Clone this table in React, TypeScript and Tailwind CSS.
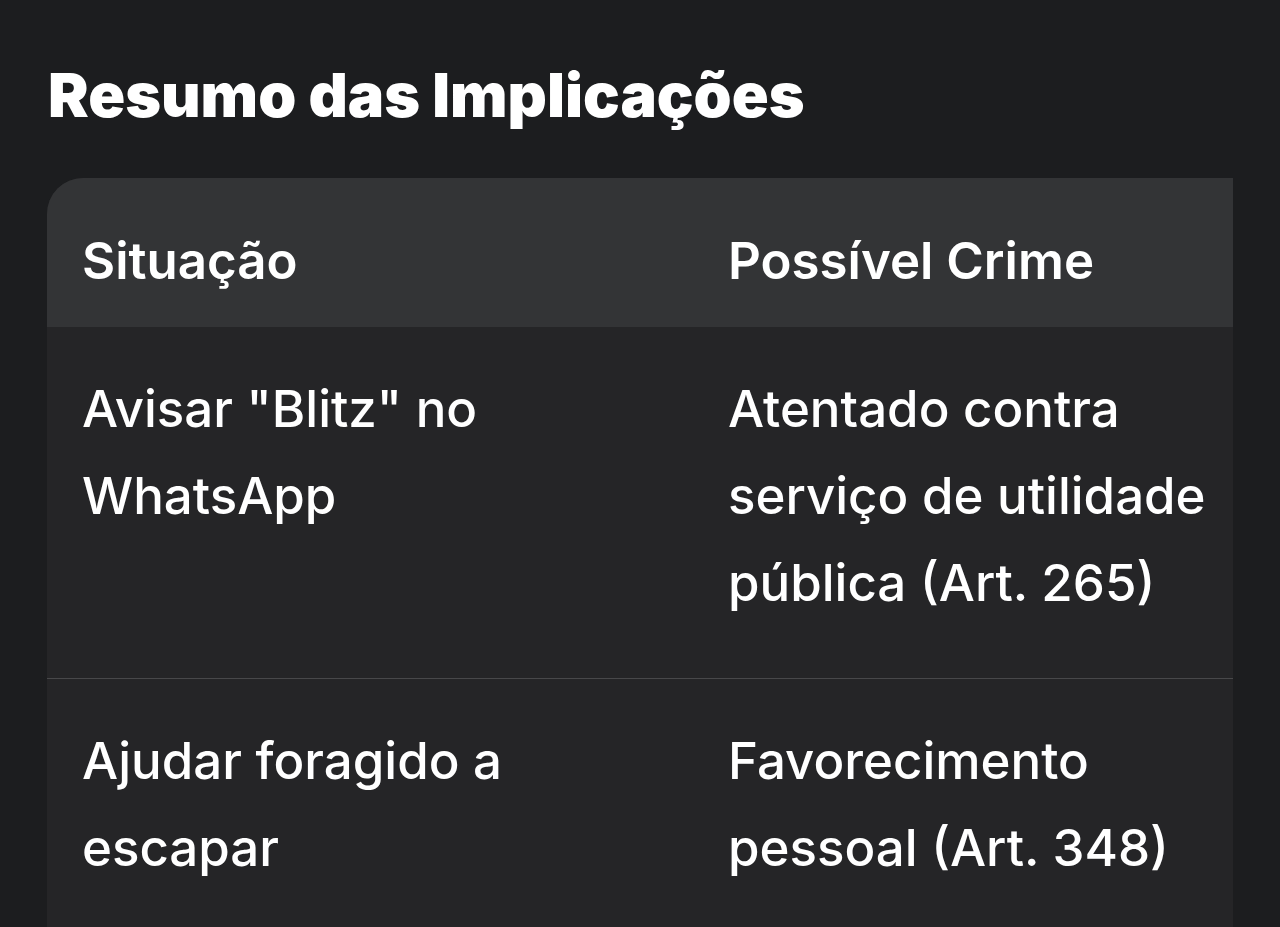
const rows = [
  { situation: 'Avisar "Blitz" no WhatsApp', crime: "Atentado contra serviço de utilidade pública (Art. 265)" },
  { situation: "Ajudar foragido a escapar", crime: "Favorecimento pessoal (Art. 348)" },
];

export default function App() {
  return (
    <div className="min-h-[927px] overflow-hidden bg-[#1c1d1f] pl-[48px] pt-[55px] text-white font-['Inter',sans-serif]">
      <h1 className="text-[61px] font-black leading-[80px]">Resumo das Implicações</h1>
      <div className="mt-[43px] -ml-px w-[1186px] overflow-hidden rounded-tl-[36px] bg-[#252527]">
        <div className="grid grid-cols-[646px_1fr] bg-[#333436] h-[149px] items-center pt-[18px]">
          <div className="pl-[35px] pr-[36px] text-[51px] font-semibold">Situação</div>
          <div className="pl-[35px] pr-[36px] text-[51px] font-semibold">Possível Crime</div>
        </div>
        {rows.map((r, i) => (
          <div
            key={i}
            className={`grid grid-cols-[646px_1fr] pt-[38px] pb-[52px] text-[51px] font-medium leading-[87px] ${i > 0 ? "border-t border-[#48484a]" : ""}`}
          >
            <div className="pl-[35px] pr-[36px]">{r.situation}</div>
            <div className="pl-[35px] pr-[16px]">{r.crime}</div>
          </div>
        ))}
      </div>
    </div>
  );
}
